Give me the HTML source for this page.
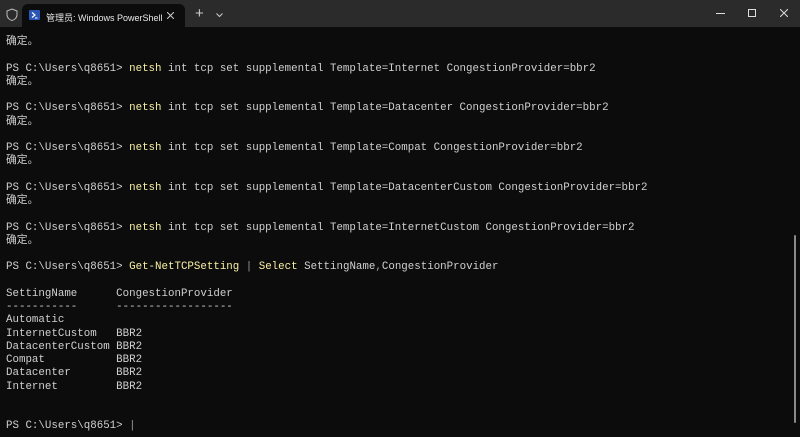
<!DOCTYPE html><html><head><meta charset="utf-8"><style>
body{margin:0;width:800px;height:437px;background:#0c0c0c;overflow:hidden;position:relative;font-family:"Liberation Sans","Noto Sans CJK SC",sans-serif}
.tb{position:absolute;left:0;top:0;width:800px;height:27px;background:#2b2b2b}
.tab{position:absolute;left:22px;top:4px;width:163px;height:23px;background:#0c0c0c;border-radius:6px 6px 0 0}
.tt{position:absolute;left:46px;top:11px;font-size:9px;color:#e8e8e8}
pre{position:absolute;left:6px;top:36px;margin:0;font-family:"Liberation Mono","Noto Sans CJK SC",monospace;font-size:10.8px;line-height:13.25px;color:#d0d0d0}
.y{color:#f9f1a5}.g{color:#9a9a9a}
</style></head><body>
<div class="tb">
<svg style="position:absolute;left:6px;top:8px" width="12" height="13" viewBox="0 0 12 13"><path d="M6 1 L11 3 V7 C11 10 8 12 6 12.5 C4 12 1 10 1 7 V3 Z" fill="none" stroke="#bbb" stroke-width="1"/></svg>
<div class="tab"></div>
<svg style="position:absolute;left:29px;top:10px" width="11" height="10"><rect x="0" y="0" width="11" height="10" rx="1" fill="#2a56b8"/><path d="M3 2.5 L6 5 L3 7.5" stroke="#fff" fill="none" stroke-width="1.2"/><path d="M6 8 H8.5" stroke="#fff"/></svg>
<div class="tt">管理员: Windows PowerShell</div>
<svg style="position:absolute;left:167px;top:12px" width="7" height="7"><path d="M0 0 L7 7 M7 0 L0 7" stroke="#ccc"/></svg>
<div style="position:absolute;left:195px;top:5px;color:#ccc;font-size:15px">+</div>
<svg style="position:absolute;left:216px;top:13px" width="7" height="5"><path d="M0.5 0.5 L3.5 3.5 L6.5 0.5" stroke="#ccc" fill="none"/></svg>
<div style="position:absolute;left:716px;top:13px;width:9px;height:1px;background:#ddd"></div>
<div style="position:absolute;left:748px;top:9px;width:6px;height:6px;border:1px solid #ddd"></div>
<svg style="position:absolute;left:780px;top:9px" width="8" height="8"><path d="M0 0 L8 8 M8 0 L0 8" stroke="#ddd"/></svg>
</div>
<pre>确定。

PS C:\Users\q8651&gt; <span class="y">netsh</span> int tcp set supplemental Template=Internet CongestionProvider=bbr2
确定。

PS C:\Users\q8651&gt; <span class="y">netsh</span> int tcp set supplemental Template=Datacenter CongestionProvider=bbr2
确定。

PS C:\Users\q8651&gt; <span class="y">netsh</span> int tcp set supplemental Template=Compat CongestionProvider=bbr2
确定。

PS C:\Users\q8651&gt; <span class="y">netsh</span> int tcp set supplemental Template=DatacenterCustom CongestionProvider=bbr2
确定。

PS C:\Users\q8651&gt; <span class="y">netsh</span> int tcp set supplemental Template=InternetCustom CongestionProvider=bbr2
确定。

PS C:\Users\q8651&gt; <span class="y">Get-NetTCPSetting</span> <span class="g">|</span> <span class="y">Select</span> SettingName<span class="g">,</span>CongestionProvider

SettingName      CongestionProvider
-----------      ------------------
Automatic
InternetCustom   BBR2
DatacenterCustom BBR2
Compat           BBR2
Datacenter       BBR2
Internet         BBR2


PS C:\Users\q8651&gt; <span class="g">|</span></pre>
<div style="position:absolute;left:794px;top:235px;width:2px;height:188px;background:#8a8a8a;border-radius:1px"></div>
</body></html>
